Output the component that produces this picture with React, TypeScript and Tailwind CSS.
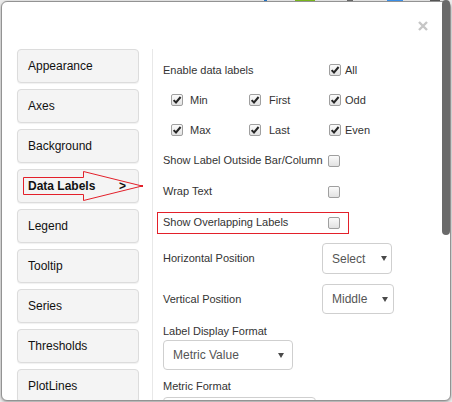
import React from "react";

const Check = ({ checked }: { checked?: boolean }) => (
  <span className="inline-flex h-[12px] w-[12px] shrink-0 items-center justify-center rounded-[2px] border border-[#9f9f9f] bg-linear-to-b from-[#fbfbfb] to-[#e2e2e2]">
    {checked && (
      <svg width="10" height="10" viewBox="0 0 10 10">
        <path d="M1.6 5.1 L4 7.5 L8.6 2" fill="none" stroke="#262626" strokeWidth="2" />
      </svg>
    )}
  </span>
);

const Caret = () => (
  <svg width="6" height="5" viewBox="0 0 6 5" className="shrink-0">
    <polygon points="0,0 6,0 3,5" fill="#4a4a4a" />
  </svg>
);

const SelectBox = ({ text, w, h, pr }: { text: string; w: string; h: string; pr: string }) => (
  <div className={`flex shrink-0 items-center justify-between rounded-[4px] border border-[#cfcfcf] bg-white pl-[9px] text-[12px] text-[#555] ${w} ${h} ${pr}`}>
    <span>{text}</span>
    <Caret />
  </div>
);

const navItems = ["Appearance", "Axes", "Background", "Data Labels", "Legend", "Tooltip", "Series", "Thresholds", "PlotLines"];

export default function App() {
  return (
    <div className="relative h-[402px] w-[452px] overflow-hidden bg-[#ececec] pl-[1px] pt-[1px] font-['Liberation_Sans',Arial,sans-serif]">
      {/* page bits behind the modal */}
      <div className="absolute left-[264px] top-0 h-px w-[3px] bg-[#1f6fc0]" />
      <div className="absolute left-[295px] top-0 h-px w-[20px] bg-[#78b51c]" />
      <div className="absolute left-[347px] top-0 h-px w-[6px] bg-[#666]" />
      <div className="absolute left-[387px] top-0 h-px w-[16px] bg-[#3a8ee6]" />
      <div className="absolute left-[430px] top-0 h-px w-[10px] bg-[#555]" />

      <div className="flex h-[400px] w-[450px] flex-col overflow-hidden rounded-[6px] border border-[#939393] bg-white shadow-[0_1px_3px_rgba(0,0,0,0.35)]">
        {/* header */}
        <div className="flex h-[47px] shrink-0 items-start justify-end pr-[22px] pt-[19px]">
          <svg width="10" height="10" viewBox="0 0 10 10">
            <path d="M1 1 L9 9 M9 1 L1 9" stroke="#c6c6c6" strokeWidth="2.4" />
          </svg>
        </div>

        {/* body */}
        <div className="flex min-h-0 flex-1 overflow-hidden">
          <div className="ml-[15px] flex w-[122px] shrink-0 flex-col gap-[6px]">
            {navItems.map((n) => (
              <div
                key={n}
                className={`flex h-[34px] shrink-0 items-center justify-between rounded-[4px] border border-[#dcdcdc] bg-[#f4f4f4] pl-[10px] pr-[12px] text-[12px] text-[#111] shadow-[0_1px_1px_rgba(0,0,0,0.06)] ${n === "Data Labels" ? "font-bold" : ""}`}
              >
                <span>{n}</span>
                {n === "Data Labels" && <span className="font-bold">&gt;</span>}
              </div>
            ))}
          </div>

          <div className="ml-[13px] w-px shrink-0 bg-[#e8e8e8]" />

          <div className="flex flex-1 flex-col pl-[10px] pt-[6px] text-[11px] text-[#333]">
            <div className="flex h-[30px] shrink-0 items-center">
              <span className="w-[166px]">Enable data labels</span>
              <Check checked />
              <span className="ml-[4px]">All</span>
            </div>
            {[
              ["Min", "First", "Odd"],
              ["Max", "Last", "Even"],
            ].map((r) => (
              <div key={r[0]} className="flex h-[30px] shrink-0 items-center pl-[8px]">
                <div className="flex w-[78px] items-center gap-[7px]">
                  <Check checked />
                  <span>{r[0]}</span>
                </div>
                <div className="flex w-[80px] items-center gap-[8px]">
                  <Check checked />
                  <span>{r[1]}</span>
                </div>
                <div className="flex items-center gap-[4px]">
                  <Check checked />
                  <span>{r[2]}</span>
                </div>
              </div>
            ))}
            <div className="flex h-[31px] shrink-0 items-center">
              <span className="w-[165px]">Show Label Outside Bar/Column</span>
              <Check />
            </div>
            <div className="flex h-[31px] shrink-0 items-center">
              <span className="w-[165px]">Wrap Text</span>
              <Check />
            </div>
            <div className="relative flex h-[31px] shrink-0 items-center">
              <div className="absolute left-[-6px] top-[5px] h-[22px] w-[192px] border border-[#e3202a]" />
              <span className="w-[165px]">Show Overlapping Labels</span>
              <Check />
            </div>
            <div className="mt-[5px] flex h-[31px] shrink-0 items-center">
              <span className="w-[159px]">Horizontal Position</span>
              <SelectBox text="Select" w="w-[70px]" h="h-[31px]" pr="pr-[4px]" />
            </div>
            <div className="mt-[10px] flex h-[30px] shrink-0 items-center">
              <span className="w-[159px]">Vertical Position</span>
              <SelectBox text="Middle" w="w-[72px]" h="h-[30px]" pr="pr-[5px]" />
            </div>
            <div className="mt-[10px] shrink-0 leading-[14px]">Label Display Format</div>
            <div className="mt-[2px] shrink-0">
              <SelectBox text="Metric Value" w="w-[130px]" h="h-[30px]" pr="pr-[8px]" />
            </div>
            <div className="mt-[9px] shrink-0 leading-[14px]">Metric Format</div>
            <div className="mt-[4px] h-[30px] w-[153px] shrink-0 rounded-[4px] border border-[#cfcfcf] bg-white" />
          </div>
        </div>
      </div>

      {/* scrollbar thumb */}
      <div className="absolute left-[442px] top-0 h-[235px] w-[8px] rounded-[4px] bg-[#6a6a6a]" />

      {/* red arrow annotation */}
      <svg className="pointer-events-none absolute left-0 top-0" width="452" height="402">
        <polygon
          points="23.5,177.5 83.5,177.5 83.5,171.5 142,186 83.5,200.5 83.5,194.5 23.5,194.5"
          fill="none"
          stroke="#e3202a"
          strokeWidth="1"
        />
        <rect x="140" y="185" width="3" height="2" fill="#e3202a" />
      </svg>
    </div>
  );
}
